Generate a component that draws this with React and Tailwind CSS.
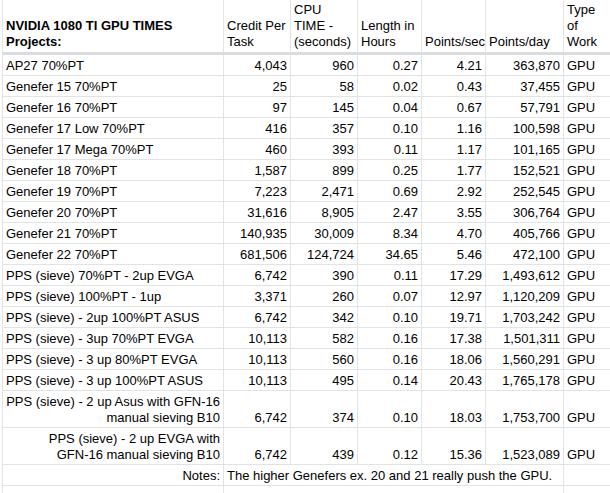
const rows = [
  ["AP27 70%PT", "4,043", "960", "0.27", "4.21", "363,870", "GPU"],
  ["Genefer 15 70%PT", "25", "58", "0.02", "0.43", "37,455", "GPU"],
  ["Genefer 16 70%PT", "97", "145", "0.04", "0.67", "57,791", "GPU"],
  ["Genefer 17 Low 70%PT", "416", "357", "0.10", "1.16", "100,598", "GPU"],
  ["Genefer 17 Mega 70%PT", "460", "393", "0.11", "1.17", "101,165", "GPU"],
  ["Genefer 18 70%PT", "1,587", "899", "0.25", "1.77", "152,521", "GPU"],
  ["Genefer 19 70%PT", "7,223", "2,471", "0.69", "2.92", "252,545", "GPU"],
  ["Genefer 20 70%PT", "31,616", "8,905", "2.47", "3.55", "306,764", "GPU"],
  ["Genefer 21 70%PT", "140,935", "30,009", "8.34", "4.70", "405,766", "GPU"],
  ["Genefer 22 70%PT", "681,506", "124,724", "34.65", "5.46", "472,100", "GPU"],
  ["PPS (sieve) 70%PT - 2up EVGA", "6,742", "390", "0.11", "17.29", "1,493,612", "GPU"],
  ["PPS (sieve) 100%PT - 1up", "3,371", "260", "0.07", "12.97", "1,120,209", "GPU"],
  ["PPS (sieve) - 2up 100%PT ASUS", "6,742", "342", "0.10", "19.71", "1,703,242", "GPU"],
  ["PPS (sieve) - 3up 70%PT EVGA", "10,113", "582", "0.16", "17.38", "1,501,311", "GPU"],
  ["PPS (sieve) - 3 up 80%PT EVGA", "10,113", "560", "0.16", "18.06", "1,560,291", "GPU"],
  ["PPS (sieve) - 3 up 100%PT ASUS", "10,113", "495", "0.14", "20.43", "1,765,178", "GPU"],
];

const tallRows = [
  [["PPS (sieve) - 2 up Asus with GFN-16", "manual sieving B10"], "6,742", "374", "0.10", "18.03", "1,753,700", "GPU"],
  [["PPS (sieve) - 2 up EVGA with", "GFN-16 manual sieving B10"], "6,742", "439", "0.12", "15.36", "1,523,089", "GPU"],
];

const widths = ["w-[221px]", "w-[67px]", "w-[67px]", "w-[64px]", "w-[64px]", "w-[78px]"];

function Row({ cells, tall }) {
  return (
    <div className={`flex border-b border-[#e2e3e3] ${tall ? "h-[37px]" : "h-[21px]"}`}>
      {cells.slice(0, 6).map((c, i) => (
        <div
          key={i}
          className={`${widths[i]} shrink-0 border-r border-[#e2e3e3] flex flex-col justify-end px-[3px] pb-[1px] ${
            i === 0 ? (tall ? "items-end text-right" : "items-start") : "items-end"
          }`}
        >
          {Array.isArray(c) ? c.map((l) => <span key={l}>{l}</span>) : <span>{c}</span>}
        </div>
      ))}
      <div className="flex-1 flex flex-col justify-end px-[3px] pb-[1px]">{cells[6]}</div>
    </div>
  );
}

export default function App() {
  return (
    <div className="w-[610px] h-[493px] overflow-hidden bg-white text-black text-[13px] leading-[16px] font-['Liberation_Sans',Arial,sans-serif]">
      <div className="ml-[2px] border-l border-[#e2e3e3]">
        {/* header */}
        <div className="flex h-[55px] border-b-[3px] border-[#dadce0]">
          <div className="w-[221px] shrink-0 border-r border-[#e2e3e3] flex flex-col justify-end px-[3px] pb-[2px] font-bold">
            <span>NVIDIA 1080 TI GPU TIMES</span>
            <span>Projects:</span>
          </div>
          <div className="w-[67px] shrink-0 border-r border-[#e2e3e3] flex flex-col justify-end px-[3px] pb-[2px]">
            <span>Credit Per</span>
            <span>Task</span>
          </div>
          <div className="w-[67px] shrink-0 border-r border-[#e2e3e3] flex flex-col justify-end px-[3px] pb-[2px] whitespace-nowrap">
            <span>CPU</span>
            <span>TIME -</span>
            <span>(seconds)</span>
          </div>
          <div className="w-[64px] shrink-0 border-r border-[#e2e3e3] flex flex-col justify-end px-[3px] pb-[2px]">
            <span>Length in</span>
            <span>Hours</span>
          </div>
          <div className="w-[64px] shrink-0 border-r border-[#e2e3e3] flex flex-col justify-end px-[3px] pb-[2px] whitespace-nowrap">
            <span>Points/sec</span>
          </div>
          <div className="w-[78px] shrink-0 border-r border-[#e2e3e3] flex flex-col justify-end px-[3px] pb-[2px]">
            <span>Points/day</span>
          </div>
          <div className="flex-1 flex flex-col justify-end px-[3px] pb-[2px]">
            <span>Type</span>
            <span>of</span>
            <span>Work</span>
          </div>
        </div>

        {rows.map((r) => (
          <Row key={r[0]} cells={r} />
        ))}
        {tallRows.map((r, i) => (
          <Row key={i} cells={r} tall />
        ))}

        {/* notes */}
        <div className="flex h-[21px] border-b border-[#e2e3e3]">
          <div className="w-[221px] shrink-0 border-r border-[#e2e3e3] flex items-end justify-end px-[3px] pb-[1px]">
            Notes:
          </div>
          <div className="w-[340px] shrink-0 border-r border-[#e2e3e3] flex items-end px-[3px] pb-[1px] whitespace-nowrap">
            The higher Genefers ex. 20 and 21 really push the GPU.
          </div>
          <div className="flex-1" />
        </div>
        <div className="flex h-[21px]">
          <div className="w-[221px] shrink-0 border-r border-[#e2e3e3]" />
          <div className="w-[340px] shrink-0 border-r border-[#e2e3e3]" />
          <div className="flex-1" />
        </div>
      </div>
    </div>
  );
}
